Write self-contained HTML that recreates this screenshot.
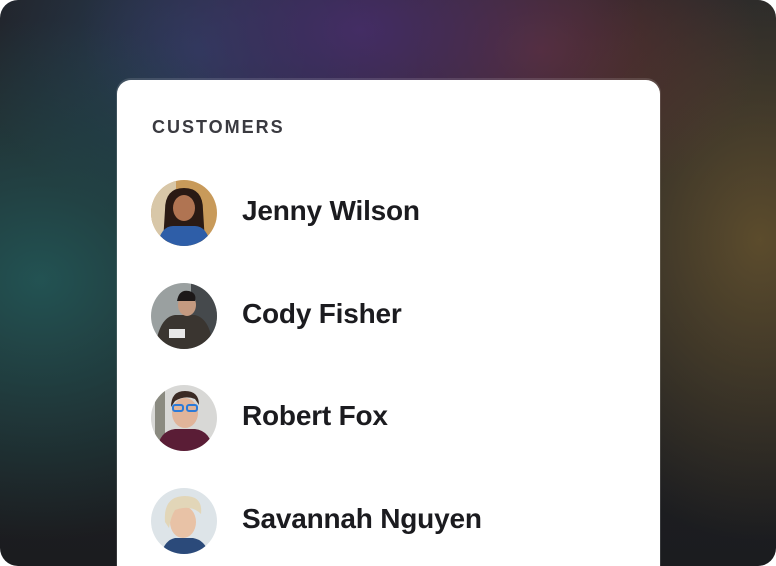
<!DOCTYPE html>
<html><head><meta charset="utf-8"><style>
html,body{margin:0;padding:0;width:776px;height:566px;overflow:hidden;background:#fff}
.frame{position:absolute;left:0;top:0;width:776px;height:566px;border-radius:18px;overflow:hidden;
background:
radial-gradient(ellipse 300px 260px at 40px 280px, rgba(35,85,85,0.95), rgba(35,85,85,0) 100%),
radial-gradient(ellipse 280px 180px at 360px 30px, rgba(70,45,105,0.9), rgba(70,45,105,0) 100%),
radial-gradient(ellipse 220px 160px at 540px 50px, rgba(105,50,50,0.8), rgba(105,50,50,0) 100%),
radial-gradient(ellipse 240px 300px at 760px 240px, rgba(95,78,45,0.95), rgba(95,78,45,0) 100%),
radial-gradient(ellipse 220px 180px at 200px 50px, rgba(40,70,100,0.8), rgba(40,70,100,0) 100%),
linear-gradient(#22242a,#1b1c1f);}
.card{position:absolute;left:117px;top:80px;width:543px;height:486px;background:#fff;border-radius:14px 14px 0 0;box-shadow:0 -1px 0 1px rgba(255,255,255,0.12)}
.title{position:absolute;left:35px;top:37px;font:bold 18px "Liberation Sans",sans-serif;letter-spacing:2px;color:#3a3a40}
.row{position:absolute;left:34px;height:66px}
.row svg{position:absolute;left:0;top:0;width:66px;height:66px;border-radius:50%}
.row span{position:absolute;left:91px;top:15px;font:600 28px "Liberation Sans",sans-serif;letter-spacing:-0.2px;color:#1b1b1f;white-space:nowrap}
</style></head><body>
<div class="frame">
<div class="card">
<div class="title">CUSTOMERS</div>
<div class="row" style="top:100px"><svg viewBox="0 0 66 66"><rect width="66" height="66" fill="#c89a5a"/><rect x="0" width="25" height="66" fill="#d8c7a8"/><path d="M14 30 Q14 8 33 8 Q52 8 52 30 L54 62 L12 62Z" fill="#2a1a14"/><ellipse cx="33" cy="28" rx="11" ry="13" fill="#b07452"/><path d="M6 66 Q10 46 22 46 L44 46 Q56 46 60 66Z" fill="#2e5ea8"/></svg><span>Jenny Wilson</span></div>
<div class="row" style="top:203px"><svg viewBox="0 0 66 66"><rect width="66" height="66" fill="#9aa0a0"/><rect x="40" width="26" height="66" fill="#45494c"/><path d="M4 66 Q8 34 24 32 L44 32 Q60 36 62 66Z" fill="#3a3530"/><ellipse cx="36" cy="22" rx="9" ry="11" fill="#c49a80"/><path d="M26 18 Q28 6 38 8 Q46 10 44 18Z" fill="#1c1818"/><rect x="18" y="46" width="16" height="9" fill="#e8e8e8"/></svg><span>Cody Fisher</span></div>
<div class="row" style="top:305px"><svg viewBox="0 0 66 66"><rect width="66" height="66" fill="#d8d8d6"/><rect x="4" width="10" height="66" fill="#8a8a80"/><path d="M6 66 Q8 46 24 44 L44 44 Q60 46 62 66Z" fill="#5a1d36"/><ellipse cx="34" cy="28" rx="13" ry="15" fill="#e0b49a"/><path d="M20 22 Q20 6 34 6 Q48 6 48 20 L44 14 Q34 10 24 16Z" fill="#3a2a24"/><rect x="22" y="20" width="10" height="6" rx="2" fill="none" stroke="#2b7ad8" stroke-width="2"/><rect x="36" y="20" width="10" height="6" rx="2" fill="none" stroke="#2b7ad8" stroke-width="2"/></svg><span>Robert Fox</span></div>
<div class="row" style="top:408px"><svg viewBox="0 0 66 66"><rect width="66" height="66" fill="#dde4e8"/><path d="M10 66 Q14 52 24 50 L42 50 Q54 52 58 66Z" fill="#2b4a7a"/><ellipse cx="32" cy="34" rx="13" ry="16" fill="#e8c2a6"/><path d="M14 34 Q12 8 34 8 Q52 8 50 26 Q40 16 24 22 Q20 28 18 40Z" fill="#e2d6b8"/></svg><span>Savannah Nguyen</span></div>
</div>
</div>
</body></html>
